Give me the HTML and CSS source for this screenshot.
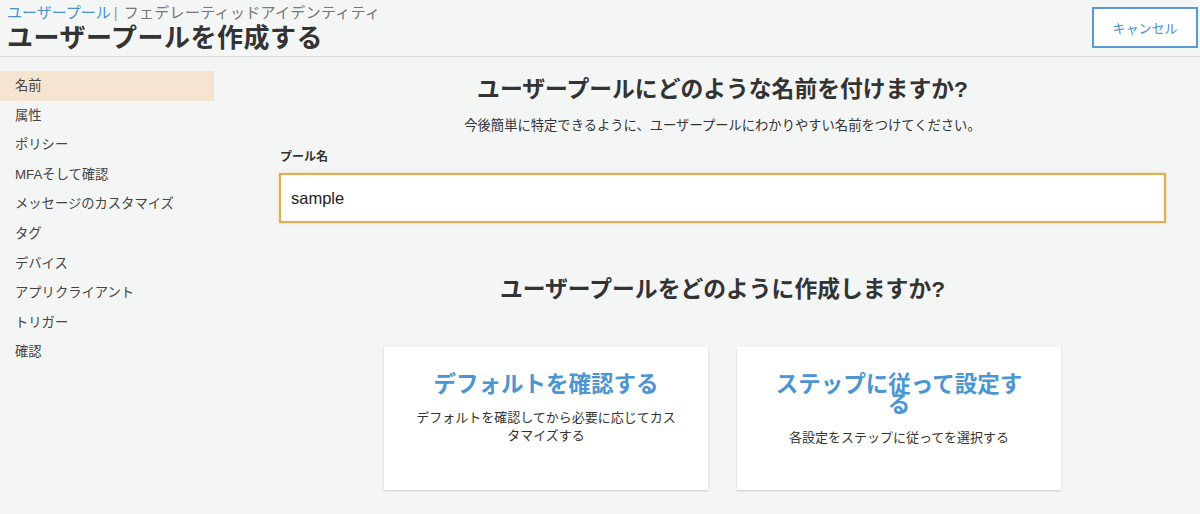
FILE: index.html
```html
<!DOCTYPE html>
<html lang="ja">
<head>
<meta charset="utf-8">
<link rel="stylesheet" href="styles.css">
</head>
<body>
<header class="header">
  <div class="header-text">
    <div class="crumbs"><span class="crumb-link">ユーザープール</span><span class="crumb-sep">|</span><span class="crumb-other">フェデレーティッドアイデンティティ</span></div>
    <h1 class="title">ユーザープールを作成する</h1>
  </div>
  <button class="cancel">キャンセル</button>
</header>
<div class="body">
  <nav class="side">
    <div class="side-item active">名前</div>
    <div class="side-item">属性</div>
    <div class="side-item">ポリシー</div>
    <div class="side-item">MFAそして確認</div>
    <div class="side-item">メッセージのカスタマイズ</div>
    <div class="side-item">タグ</div>
    <div class="side-item">デバイス</div>
    <div class="side-item">アプリクライアント</div>
    <div class="side-item">トリガー</div>
    <div class="side-item">確認</div>
  </nav>
  <main class="main">
    <h2 class="heading">ユーザープールにどのような名前を付けますか?</h2>
    <p class="sub">今後簡単に特定できるように、ユーザープールにわかりやすい名前をつけてください。</p>
    <label class="label">プール名</label>
    <div class="input">sample</div>
    <h2 class="heading heading2">ユーザープールをどのように作成しますか?</h2>
    <div class="cards">
      <div class="card">
        <div class="card-title">デフォルトを確認する</div>
        <div class="card-desc">デフォルトを確認してから必要に応じてカスタマイズする</div>
      </div>
      <div class="card">
        <div class="card-title">ステップに従って設定する</div>
        <div class="card-desc">各設定をステップに従ってを選択する</div>
      </div>
    </div>
  </main>
</div>
</body>
</html>
```
FILE: styles.css
```css
* { box-sizing: border-box; }
html, body { margin: 0; padding: 0; }
body {
  background: #f4f5f5;
  font-family: "Liberation Sans", "Noto Sans CJK JP", sans-serif;
  color: #333;
  width: 1200px;
  height: 514px;
  overflow: hidden;
}
.header {
  display: flex;
  justify-content: space-between;
  align-items: flex-start;
  height: 57px;
  border-bottom: 1px solid #d8d8d8;
  padding: 0 2px 0 7px;
}
.header-text { padding-top: 3px; }
.crumbs { font-size: 15px; line-height: 20px; color: #777; }
.crumb-link { color: #4a90cf; }
.crumb-sep { color: #999; margin: 0 6px 0 3px; }
.crumb-other { letter-spacing: 0.3px; }
.title {
  margin: 0;
  font-size: 26px;
  line-height: 30px;
  font-weight: 700;
  color: #333;
  letter-spacing: 0.5px;
}
.cancel {
  margin-top: 7px;
  width: 106px;
  height: 41px;
  background: #fff;
  border: 2px solid #5a9bd5;
  color: #4a90cf;
  font-family: inherit;
  font-size: 13px;
  padding: 0;
}
.body { display: flex; padding-top: 14px; }
.side { width: 214px; flex: none; }
.side-item {
  height: 29.6px;
  line-height: 29px;
  padding-left: 15px;
  font-size: 13.3px;
  color: #444;
}
.side-item.active { background: #f5e4cf; }
.main {
  width: 887px;
  margin-left: 65px;
  display: flex;
  flex-direction: column;
}
.heading {
  margin: 4px 0 0;
  text-align: center;
  font-size: 22.8px;
  line-height: 28px;
  font-weight: 700;
  color: #333;
}
.sub {
  margin: 14px 0 0;
  text-align: center;
  font-size: 13.3px;
  line-height: 18px;
  color: #333;
}
.label {
  margin-top: 14px;
  font-size: 12px;
  font-weight: 700;
  line-height: 16px;
  padding-left: 1px;
}
.input {
  margin-top: 8px;
  height: 50px;
  background: #fff;
  border: 2px solid #e3ac53;
  box-shadow: 0 0 2px rgba(227, 172, 83, 0.6);
  padding-left: 10px;
  font-size: 16.5px;
  line-height: 46px;
  color: #222;
}
.heading2 { margin-top: 52px; }
.cards {
  display: flex;
  justify-content: center;
  gap: 29px;
  margin-top: 44px;
}
.card {
  width: 324px;
  height: 143px;
  background: #fff;
  box-shadow: 0 1px 2px rgba(0, 0, 0, 0.18);
  padding: 23px 31px 0;
  text-align: center;
}
.card-title {
  font-size: 22.5px;
  line-height: 20px;
  font-weight: 700;
  color: #4a95d2;
  padding: 5px 0;
}
.card-desc {
  margin-top: 9px;
  font-size: 13px;
  line-height: 18px;
  color: #333;
}
```
